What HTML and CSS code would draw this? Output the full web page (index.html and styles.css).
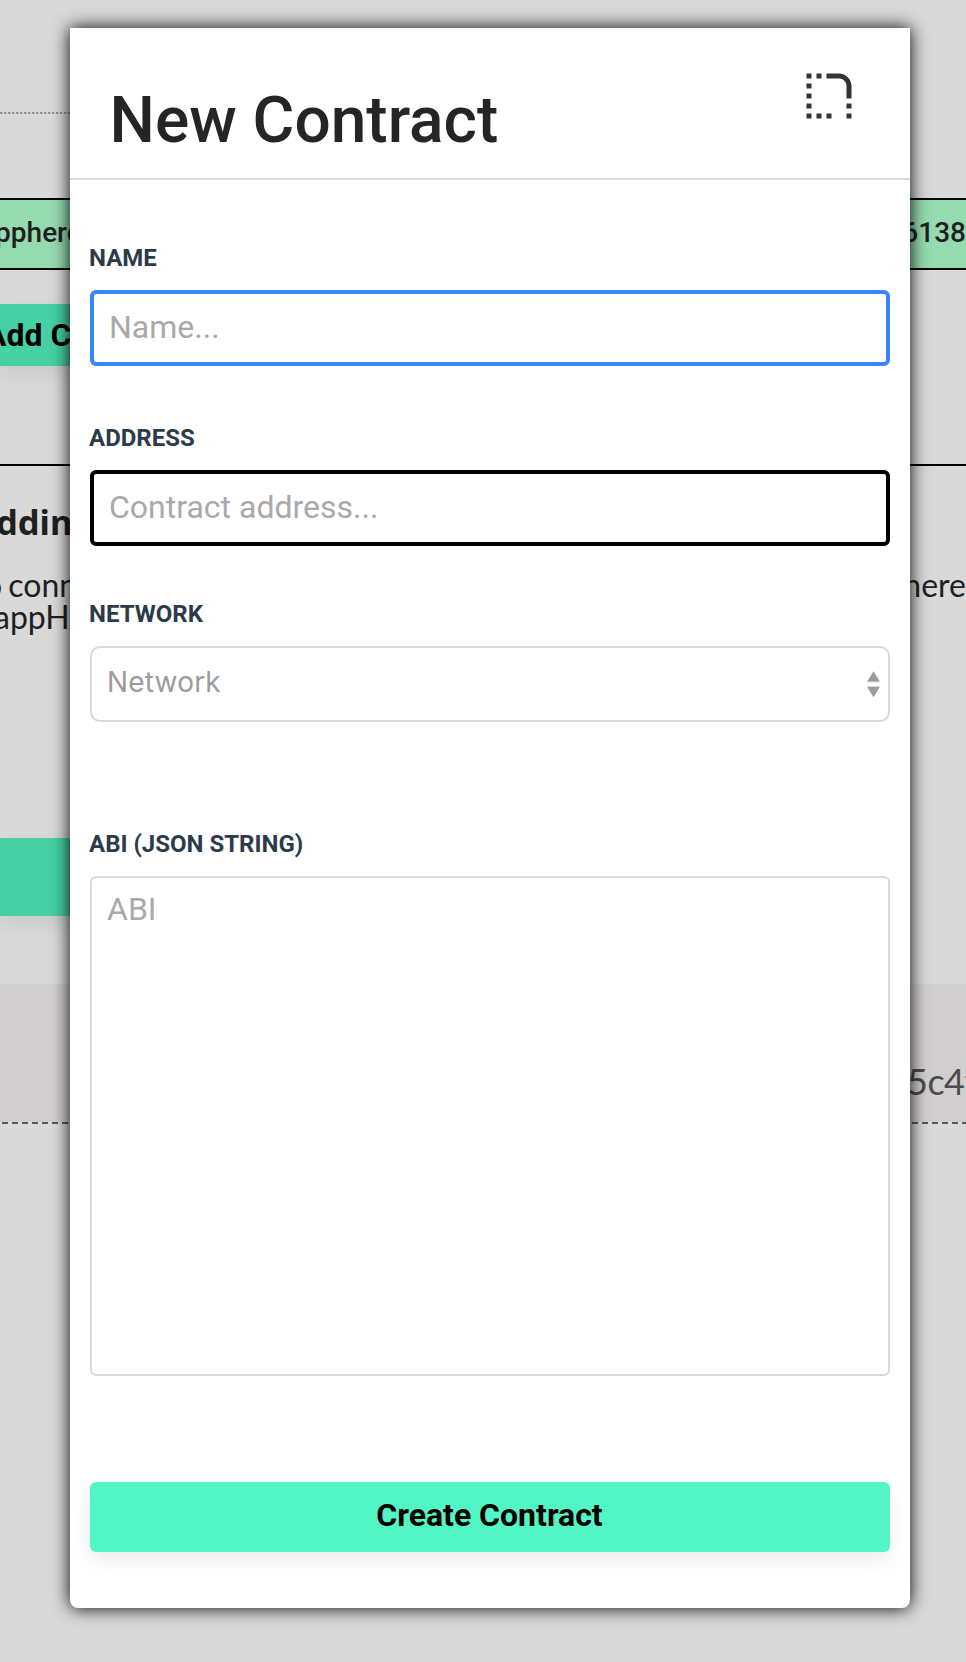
FILE: index.html
```html
<!DOCTYPE html>
<html lang="en">
<head>
<meta charset="utf-8">
<title>New Contract</title>
<link rel="stylesheet" href="styles.css">
</head>
<body>
<div class="page">
  <div class="nav"></div>
  <div class="banner"><span class="banner-start">apphere</span><span class="banner-end">6138</span></div>
  <div class="add-button"><span>Add C</span></div>
  <div class="intro">
    <h2 class="intro-title">ddin</h2>
    <div class="intro-row"><span class="intro-start">o conn</span><span class="intro-end">here</span></div>
    <div class="intro-row"><span class="intro-second">appH</span></div>
  </div>
  <div class="page-action"></div>
  <div class="record"><span>5c4f</span></div>
</div>

<section class="modal">
  <header class="modal-header">
    <h1 class="modal-title">New Contract</h1>
    <svg class="modal-icon" viewBox="0 0 24 24" fill="#333"><path d="M19 19h2v2h-2zM19 15h2v2h-2zM3 11h2v2H3zM3 15h2v2H3zM3 7h2v2H3zM3 3h2v2H3zM7 3h2v2H7zM11 19h2v2h-2zM7 19h2v2H7zM3 19h2v2H3zM21 8c0-2.76-2.24-5-5-5h-5v2h5c1.65 0 3 1.35 3 3v5h2V8z"/></svg>
  </header>
  <form class="form">
    <label class="label" for="name">NAME</label>
    <input class="input input-focus" id="name" placeholder="Name...">
    <label class="label" for="address">ADDRESS</label>
    <input class="input" id="address" placeholder="Contract address...">
    <span class="label label-network">NETWORK</span>
    <div class="select">
      <span class="select-value">Network</span>
      <svg class="select-arrows" viewBox="0 0 13 27" fill="#9b9b9b"><path d="M6.5 0.3L12.8 10.5H0.2zM6.5 26.2L12.8 16H0.2z"/><path d="M0.2 10.6h12.6v.7H0.2zM0.2 15.2h12.6v.7H0.2z" opacity=".5"/></svg>
    </div>
    <label class="label label-abi" for="abi">ABI (JSON STRING)</label>
    <textarea class="textarea" id="abi" placeholder="ABI"></textarea>
    <button class="submit" type="button">Create Contract</button>
  </form>
</section>
</body>
</html>
```
FILE: styles.css
```css
* { box-sizing: border-box; }

body {
  margin: 0;
  width: 966px;
  height: 1662px;
  overflow: hidden;
  position: relative;
  background: #d9d9d9;
  font-family: Roboto, sans-serif;
}

h1, h2 { margin: 0; }

.page {
  height: 1662px;
  overflow: hidden;
  white-space: nowrap;
  color: #1f1f1f;
}

.nav {
  width: 70px;
  height: 114px;
  background: repeating-linear-gradient(90deg, #929292 0 2px, #c2c2c2 2px 3px, transparent 3px 4px) 0 100% / 100% 2px no-repeat;
}

.banner {
  display: flex;
  justify-content: space-between;
  height: 72px;
  margin-top: 84px;
  border-top: 2px solid #000;
  border-bottom: 2px solid #000;
  background: #96dab0;
  font-size: 28px;
  font-weight: 500;
  line-height: 65px;
}

.banner-start { margin-left: -20px; }

.add-button {
  width: 160px;
  height: 62px;
  margin-top: 34px;
  background: #45d1a4;
  box-shadow: 0 8px 20px rgba(0, 0, 0, .07);
  color: #000;
  font-size: 32px;
  font-weight: 700;
  line-height: 63px;
}

.add-button span { margin-left: -15px; }

.intro {
  height: 374px;
  margin-top: 98px;
  padding-top: 34px;
  border-top: 2px solid #000;
  font-family: Lato, sans-serif;
}

.intro-title {
  height: 68px;
  margin-left: -4px;
  font-family: "Noto Sans", sans-serif;
  font-size: 34.5px;
  font-weight: 700;
  line-height: 44px;
}

.intro-row {
  display: flex;
  height: 32px;
  font-size: 32px;
  line-height: 33px;
}

.intro-start { width: 926px; margin-left: -16px; word-spacing: -2px; }
.intro-second { margin-left: -6px; }

.page-action {
  width: 160px;
  height: 78px;
  background: #45d1a4;
  box-shadow: 0 8px 20px rgba(0, 0, 0, .07);
}

.record {
  height: 140px;
  margin-top: 68px;
  padding: 72px 0 0 907px;
  background: repeating-linear-gradient(90deg, transparent 0 2px, #5a5858 2px 8px, transparent 8px 10px) 0 100% / 100% 2px no-repeat, linear-gradient(#d1cecf, #d1cecf) 0 0 / 100% 138px no-repeat;
  color: #4c4b4b;
  font-family: Lato, sans-serif;
  font-size: 36px;
  letter-spacing: -.5px;
  line-height: 50px;
}

.modal {
  position: absolute;
  top: 28px;
  left: 70px;
  width: 840px;
  height: 1580px;
  border-radius: 0 0 8px 8px;
  background: #fff;
  box-shadow: 0 0 18px #000;
}

.modal-header {
  display: flex;
  justify-content: space-between;
  height: 152px;
  padding: 37.5px 51.5px 0 39.5px;
  border-bottom: 2px solid #d5dadf;
}

.modal-title {
  padding-top: 17.5px;
  color: #252525;
  font-size: 64px;
  font-weight: 500;
  line-height: 76px;
}

.modal-icon { width: 60px; height: 60px; }

.form {
  display: flex;
  flex-direction: column;
  padding: 64px 20px 0;
}

.label {
  height: 28px;
  margin-left: -1px;
  margin-bottom: 18px;
  color: #2c3b49;
  font-size: 24px;
  font-weight: 700;
  line-height: 28px;
}

.input {
  width: 100%;
  height: 76px;
  margin: 0 0 58px;
  padding: 0 15px 2px;
  border: 4px solid #000;
  border-radius: 6px;
  background: #fff;
  font: 400 32px/38px Roboto, sans-serif;
  outline: 0;
}

.input-focus { border-color: #3a86ff; }

.input::placeholder, .textarea::placeholder { color: #a9a9a9; opacity: 1; }

.label-network { margin-top: -4px; }

.select {
  display: flex;
  align-items: center;
  justify-content: space-between;
  height: 76px;
  padding: 0 8px 0 15px;
  border: 2px solid #d5dadf;
  border-radius: 10px;
  color: #9b9b9b;
}

.select-value {
  padding-bottom: 4px;
  font-family: Inter, sans-serif;
  font-size: 28px;
  letter-spacing: .2px;
}

.select-arrows { width: 13px; height: 27px; }

.label-abi { margin-top: 108px; }

.textarea {
  width: 100%;
  height: 500px;
  margin: 0;
  padding: 12px 15px;
  border: 2px solid #d5dadf;
  border-radius: 6px;
  background: #fff;
  font: 400 32px/38px Roboto, sans-serif;
  resize: none;
  outline: 0;
}

.submit {
  height: 70px;
  margin: 106px 0 0;
  padding: 0 1px 4px 0;
  border: 0;
  border-radius: 6px;
  background: #52f6c4;
  box-shadow: 0 8px 20px rgba(0, 0, 0, .08);
  color: #000;
  font: 700 32px/66px Roboto, sans-serif;
}
```
